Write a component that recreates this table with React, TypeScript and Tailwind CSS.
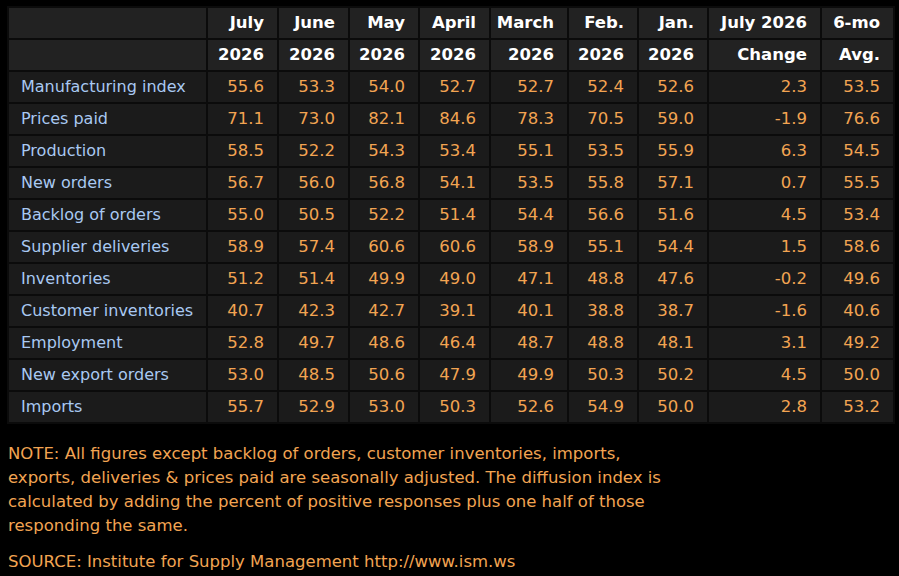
import React from "react";

const months = [
  { top: "July", bottom: "2026", w: "w-[71px]" },
  { top: "June", bottom: "2026", w: "w-[71px]" },
  { top: "May", bottom: "2026", w: "w-[70px]" },
  { top: "April", bottom: "2026", w: "w-[71px]" },
  { top: "March", bottom: "2026", w: "w-[78px]" },
  { top: "Feb.", bottom: "2026", w: "w-[70px]" },
  { top: "Jan.", bottom: "2026", w: "w-[70px]" },
  { top: "July 2026", bottom: "Change", w: "w-[113px]" },
  { top: "6-mo", bottom: "Avg.", w: "w-[73px]" },
];

const rows: [string, string[]][] = [
  ["Manufacturing index", ["55.6", "53.3", "54.0", "52.7", "52.7", "52.4", "52.6", "2.3", "53.5"]],
  ["Prices paid", ["71.1", "73.0", "82.1", "84.6", "78.3", "70.5", "59.0", "-1.9", "76.6"]],
  ["Production", ["58.5", "52.2", "54.3", "53.4", "55.1", "53.5", "55.9", "6.3", "54.5"]],
  ["New orders", ["56.7", "56.0", "56.8", "54.1", "53.5", "55.8", "57.1", "0.7", "55.5"]],
  ["Backlog of orders", ["55.0", "50.5", "52.2", "51.4", "54.4", "56.6", "51.6", "4.5", "53.4"]],
  ["Supplier deliveries", ["58.9", "57.4", "60.6", "60.6", "58.9", "55.1", "54.4", "1.5", "58.6"]],
  ["Inventories", ["51.2", "51.4", "49.9", "49.0", "47.1", "48.8", "47.6", "-0.2", "49.6"]],
  ["Customer inventories", ["40.7", "42.3", "42.7", "39.1", "40.1", "38.8", "38.7", "-1.6", "40.6"]],
  ["Employment", ["52.8", "49.7", "48.6", "46.4", "48.7", "48.8", "48.1", "3.1", "49.2"]],
  ["New export orders", ["53.0", "48.5", "50.6", "47.9", "49.9", "50.3", "50.2", "4.5", "50.0"]],
  ["Imports", ["55.7", "52.9", "53.0", "50.3", "52.6", "54.9", "50.0", "2.8", "53.2"]],
];

const cell = "border-2 border-[#0b0b0b] pr-[13px] text-right text-[16.5px]";

export default function App() {
  return (
    <div
      className="w-[899px] h-[576px] bg-black overflow-hidden pt-[6px] pl-[7px]"
      style={{ fontFamily: '"DejaVu Sans", Verdana, sans-serif' }}
    >
      <table className="border-collapse table-fixed text-[16px] leading-none">
        <thead>
          <tr className="h-[32px] bg-[#222222] text-white">
            <th className="w-[199px] border-2 border-[#0b0b0b]" />
            {months.map((m) => (
              <th key={m.top} className={`${m.w} ${cell} font-bold`}>
                {m.top}
              </th>
            ))}
          </tr>
          <tr className="h-[32px] bg-[#222222] text-white">
            <th className="border-2 border-[#0b0b0b]" />
            {months.map((m) => (
              <th key={m.top} className={`${cell} font-bold`}>
                {m.bottom}
              </th>
            ))}
          </tr>
        </thead>
        <tbody>
          {rows.map(([label, vals]) => (
            <tr key={label} className="h-[32px] bg-[#1b1b1b]">
              <td className="border-2 border-[#0b0b0b] pl-[12px] text-left text-[#a9c9f2] whitespace-nowrap">
                {label}
              </td>
              {vals.map((v, i) => (
                <td key={i} className={`${cell} text-[#f2a452]`}>
                  {v}
                </td>
              ))}
            </tr>
          ))}
        </tbody>
      </table>

      <div className="mt-[18px] pl-[1px] text-[16.5px] leading-[24px] text-[#f2a452] whitespace-nowrap">
        <p>NOTE: All figures except backlog of orders, customer inventories, imports,</p>
        <p>exports, deliveries &amp; prices paid are seasonally adjusted. The diffusion index is</p>
        <p>calculated by adding the percent of positive responses plus one half of those</p>
        <p>responding the same.</p>
        <p className="mt-[12px]">SOURCE: Institute for Supply Management http://www.ism.ws</p>
      </div>
    </div>
  );
}
